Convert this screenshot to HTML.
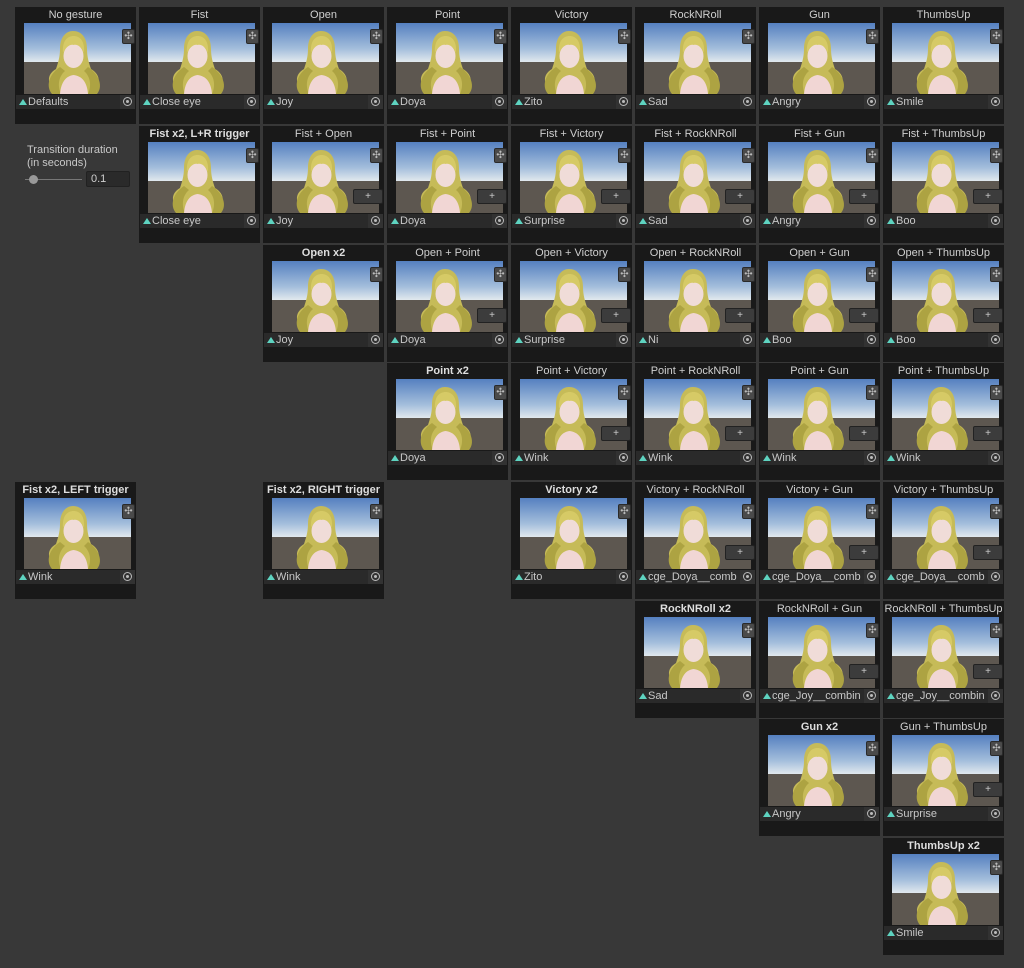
<!DOCTYPE html>
<html><head><meta charset="utf-8"><style>
body{margin:0;width:1024px;height:968px;background:#383838;position:relative;overflow:hidden;font-family:"Liberation Sans",sans-serif}
.c{position:absolute;width:121px;height:117px;background:#191919}
.t{position:absolute;left:0;top:0;width:121px;height:16px;line-height:16px;text-align:center;font-size:11px;color:#cfcfcf;white-space:nowrap;overflow:hidden}
.t.b{font-weight:bold;color:#dedede}
.im{position:absolute;left:9px;top:16px;width:107px;height:71px}
.mv{position:absolute;left:107px;top:22px;width:13px;height:15px;background:#4a4a4a;border-radius:2px;border:1px solid #2a2a2a;box-sizing:border-box;color:#bbb;font-size:10px;text-align:center;line-height:13px;font-style:normal}
.p{position:absolute;left:90px;top:63px;width:30px;height:15px;background:#3c3c3c;border:1px solid #222;box-sizing:border-box;border-radius:2px;color:#ccc;font-size:10px;text-align:center;line-height:13px}
.f{position:absolute;left:1px;top:88px;width:119px;height:14px;background:#2a2a2a;font-size:11px;color:#c8c8c8;line-height:14px;white-space:nowrap;overflow:hidden}
.f s{display:inline-block;width:0;height:0;border-left:4px solid transparent;border-right:4px solid transparent;border-bottom:6px solid #5ed3c0;margin:0 1px 0 3px;text-decoration:none}
.f u{position:absolute;right:0;top:0;width:15px;height:14px;background:#323232}
.f u:after{content:"";position:absolute;left:3px;top:2px;border:1px solid #bbb;border-radius:50%;width:7px;height:7px}
.f u:before{content:"";position:absolute;left:6px;top:5px;width:3px;height:3px;background:#bbb;border-radius:50%}
</style></head><body>
<svg width="0" height="0" style="position:absolute"><defs>
<linearGradient id="sk" x1="0" y1="0" x2="0" y2="1"><stop offset="0" stop-color="#5580c0"/><stop offset="0.65" stop-color="#a5bfdc"/><stop offset="1" stop-color="#e6ecef"/></linearGradient>
<symbol id="a" viewBox="0 0 107 71">
<rect width="107" height="40" fill="url(#sk)"/><rect y="39" width="107" height="32" fill="#5d5750"/>
<path d="M36 71 C22 62 22 52 32 46 C34 40 36 34 36 26 C36 14 42 8 49 8 C57 8 63 14 63 26 C63 34 65 40 67 46 C77 52 78 62 66 71Z" fill="#c6bb58"/>
<path d="M36 44 C24 52 22 64 28 71 L37 71 C33 62 35 53 41 48Z M64 44 C76 52 79 64 73 71 L64 71 C68 62 66 53 60 48Z" fill="#ada342"/>
<ellipse cx="49.5" cy="33" rx="10" ry="12" fill="#f0dcd8"/>
<path d="M39 30 C38 17 44 13 49.5 13 C56 13 61 18 60 30 C57 23 53 21 49.5 22 C46 21 42 24 39 30Z" fill="#d6ca66"/>
<path d="M36 71 C37 59 42 53 49.5 52 C58 53 63 59 64 71Z" fill="#f1d6d4"/>
</symbol></defs></svg>

<div style="position:absolute;left:27px;top:144px;font-size:11px;color:#c8c8c8;line-height:13px">Transition duration<br>(in seconds)</div>
<div style="position:absolute;left:25px;top:179px;width:57px;height:1px;background:#777"></div>
<div style="position:absolute;left:29px;top:175px;width:9px;height:9px;border-radius:50%;background:#999"></div>
<div style="position:absolute;left:86px;top:171px;width:44px;height:16px;background:#2a2a2a;border:1px solid #212121;box-sizing:border-box;border-radius:2px;color:#d0d0d0;font-size:11px;line-height:14px;padding-left:4px">0.1</div>

<div class=c style="left:15px;top:7px"><div class=t>No gesture</div><svg class=im><use href="#a"/></svg><i class=mv>✣</i><div class=f><s></s>Defaults<u></u></div></div>
<div class=c style="left:139px;top:7px"><div class=t>Fist</div><svg class=im><use href="#a"/></svg><i class=mv>✣</i><div class=f><s></s>Close eye<u></u></div></div>
<div class=c style="left:263px;top:7px"><div class=t>Open</div><svg class=im><use href="#a"/></svg><i class=mv>✣</i><div class=f><s></s>Joy<u></u></div></div>
<div class=c style="left:387px;top:7px"><div class=t>Point</div><svg class=im><use href="#a"/></svg><i class=mv>✣</i><div class=f><s></s>Doya<u></u></div></div>
<div class=c style="left:511px;top:7px"><div class=t>Victory</div><svg class=im><use href="#a"/></svg><i class=mv>✣</i><div class=f><s></s>Zito<u></u></div></div>
<div class=c style="left:635px;top:7px"><div class=t>RockNRoll</div><svg class=im><use href="#a"/></svg><i class=mv>✣</i><div class=f><s></s>Sad<u></u></div></div>
<div class=c style="left:759px;top:7px"><div class=t>Gun</div><svg class=im><use href="#a"/></svg><i class=mv>✣</i><div class=f><s></s>Angry<u></u></div></div>
<div class=c style="left:883px;top:7px"><div class=t>ThumbsUp</div><svg class=im><use href="#a"/></svg><i class=mv>✣</i><div class=f><s></s>Smile<u></u></div></div>

<div class=c style="left:139px;top:126px"><div class="t b">Fist x2, L+R trigger</div><svg class=im><use href="#a"/></svg><i class=mv>✣</i><div class=f><s></s>Close eye<u></u></div></div>
<div class=c style="left:263px;top:126px"><div class=t>Fist + Open</div><svg class=im><use href="#a"/></svg><i class=mv>✣</i><div class=p>+</div><div class=f><s></s>Joy<u></u></div></div>
<div class=c style="left:387px;top:126px"><div class=t>Fist + Point</div><svg class=im><use href="#a"/></svg><i class=mv>✣</i><div class=p>+</div><div class=f><s></s>Doya<u></u></div></div>
<div class=c style="left:511px;top:126px"><div class=t>Fist + Victory</div><svg class=im><use href="#a"/></svg><i class=mv>✣</i><div class=p>+</div><div class=f><s></s>Surprise<u></u></div></div>
<div class=c style="left:635px;top:126px"><div class=t>Fist + RockNRoll</div><svg class=im><use href="#a"/></svg><i class=mv>✣</i><div class=p>+</div><div class=f><s></s>Sad<u></u></div></div>
<div class=c style="left:759px;top:126px"><div class=t>Fist + Gun</div><svg class=im><use href="#a"/></svg><i class=mv>✣</i><div class=p>+</div><div class=f><s></s>Angry<u></u></div></div>
<div class=c style="left:883px;top:126px"><div class=t>Fist + ThumbsUp</div><svg class=im><use href="#a"/></svg><i class=mv>✣</i><div class=p>+</div><div class=f><s></s>Boo<u></u></div></div>

<div class=c style="left:263px;top:245px"><div class="t b">Open x2</div><svg class=im><use href="#a"/></svg><i class=mv>✣</i><div class=f><s></s>Joy<u></u></div></div>
<div class=c style="left:387px;top:245px"><div class=t>Open + Point</div><svg class=im><use href="#a"/></svg><i class=mv>✣</i><div class=p>+</div><div class=f><s></s>Doya<u></u></div></div>
<div class=c style="left:511px;top:245px"><div class=t>Open + Victory</div><svg class=im><use href="#a"/></svg><i class=mv>✣</i><div class=p>+</div><div class=f><s></s>Surprise<u></u></div></div>
<div class=c style="left:635px;top:245px"><div class=t>Open + RockNRoll</div><svg class=im><use href="#a"/></svg><i class=mv>✣</i><div class=p>+</div><div class=f><s></s>Ni<u></u></div></div>
<div class=c style="left:759px;top:245px"><div class=t>Open + Gun</div><svg class=im><use href="#a"/></svg><i class=mv>✣</i><div class=p>+</div><div class=f><s></s>Boo<u></u></div></div>
<div class=c style="left:883px;top:245px"><div class=t>Open + ThumbsUp</div><svg class=im><use href="#a"/></svg><i class=mv>✣</i><div class=p>+</div><div class=f><s></s>Boo<u></u></div></div>

<div class=c style="left:387px;top:363px"><div class="t b">Point x2</div><svg class=im><use href="#a"/></svg><i class=mv>✣</i><div class=f><s></s>Doya<u></u></div></div>
<div class=c style="left:511px;top:363px"><div class=t>Point + Victory</div><svg class=im><use href="#a"/></svg><i class=mv>✣</i><div class=p>+</div><div class=f><s></s>Wink<u></u></div></div>
<div class=c style="left:635px;top:363px"><div class=t>Point + RockNRoll</div><svg class=im><use href="#a"/></svg><i class=mv>✣</i><div class=p>+</div><div class=f><s></s>Wink<u></u></div></div>
<div class=c style="left:759px;top:363px"><div class=t>Point + Gun</div><svg class=im><use href="#a"/></svg><i class=mv>✣</i><div class=p>+</div><div class=f><s></s>Wink<u></u></div></div>
<div class=c style="left:883px;top:363px"><div class=t>Point + ThumbsUp</div><svg class=im><use href="#a"/></svg><i class=mv>✣</i><div class=p>+</div><div class=f><s></s>Wink<u></u></div></div>

<div class=c style="left:15px;top:482px"><div class="t b">Fist x2, LEFT trigger</div><svg class=im><use href="#a"/></svg><i class=mv>✣</i><div class=f><s></s>Wink<u></u></div></div>
<div class=c style="left:263px;top:482px"><div class="t b">Fist x2, RIGHT trigger</div><svg class=im><use href="#a"/></svg><i class=mv>✣</i><div class=f><s></s>Wink<u></u></div></div>
<div class=c style="left:511px;top:482px"><div class="t b">Victory x2</div><svg class=im><use href="#a"/></svg><i class=mv>✣</i><div class=f><s></s>Zito<u></u></div></div>
<div class=c style="left:635px;top:482px"><div class=t>Victory + RockNRoll</div><svg class=im><use href="#a"/></svg><i class=mv>✣</i><div class=p>+</div><div class=f><s></s>cge_Doya__comb<u></u></div></div>
<div class=c style="left:759px;top:482px"><div class=t>Victory + Gun</div><svg class=im><use href="#a"/></svg><i class=mv>✣</i><div class=p>+</div><div class=f><s></s>cge_Doya__comb<u></u></div></div>
<div class=c style="left:883px;top:482px"><div class=t>Victory + ThumbsUp</div><svg class=im><use href="#a"/></svg><i class=mv>✣</i><div class=p>+</div><div class=f><s></s>cge_Doya__comb<u></u></div></div>

<div class=c style="left:635px;top:601px"><div class="t b">RockNRoll x2</div><svg class=im><use href="#a"/></svg><i class=mv>✣</i><div class=f><s></s>Sad<u></u></div></div>
<div class=c style="left:759px;top:601px"><div class=t>RockNRoll + Gun</div><svg class=im><use href="#a"/></svg><i class=mv>✣</i><div class=p>+</div><div class=f><s></s>cge_Joy__combin<u></u></div></div>
<div class=c style="left:883px;top:601px"><div class=t>RockNRoll + ThumbsUp</div><svg class=im><use href="#a"/></svg><i class=mv>✣</i><div class=p>+</div><div class=f><s></s>cge_Joy__combin<u></u></div></div>

<div class=c style="left:759px;top:719px"><div class="t b">Gun x2</div><svg class=im><use href="#a"/></svg><i class=mv>✣</i><div class=f><s></s>Angry<u></u></div></div>
<div class=c style="left:883px;top:719px"><div class=t>Gun + ThumbsUp</div><svg class=im><use href="#a"/></svg><i class=mv>✣</i><div class=p>+</div><div class=f><s></s>Surprise<u></u></div></div>

<div class=c style="left:883px;top:838px"><div class="t b">ThumbsUp x2</div><svg class=im><use href="#a"/></svg><i class=mv>✣</i><div class=f><s></s>Smile<u></u></div></div>
</body></html>
